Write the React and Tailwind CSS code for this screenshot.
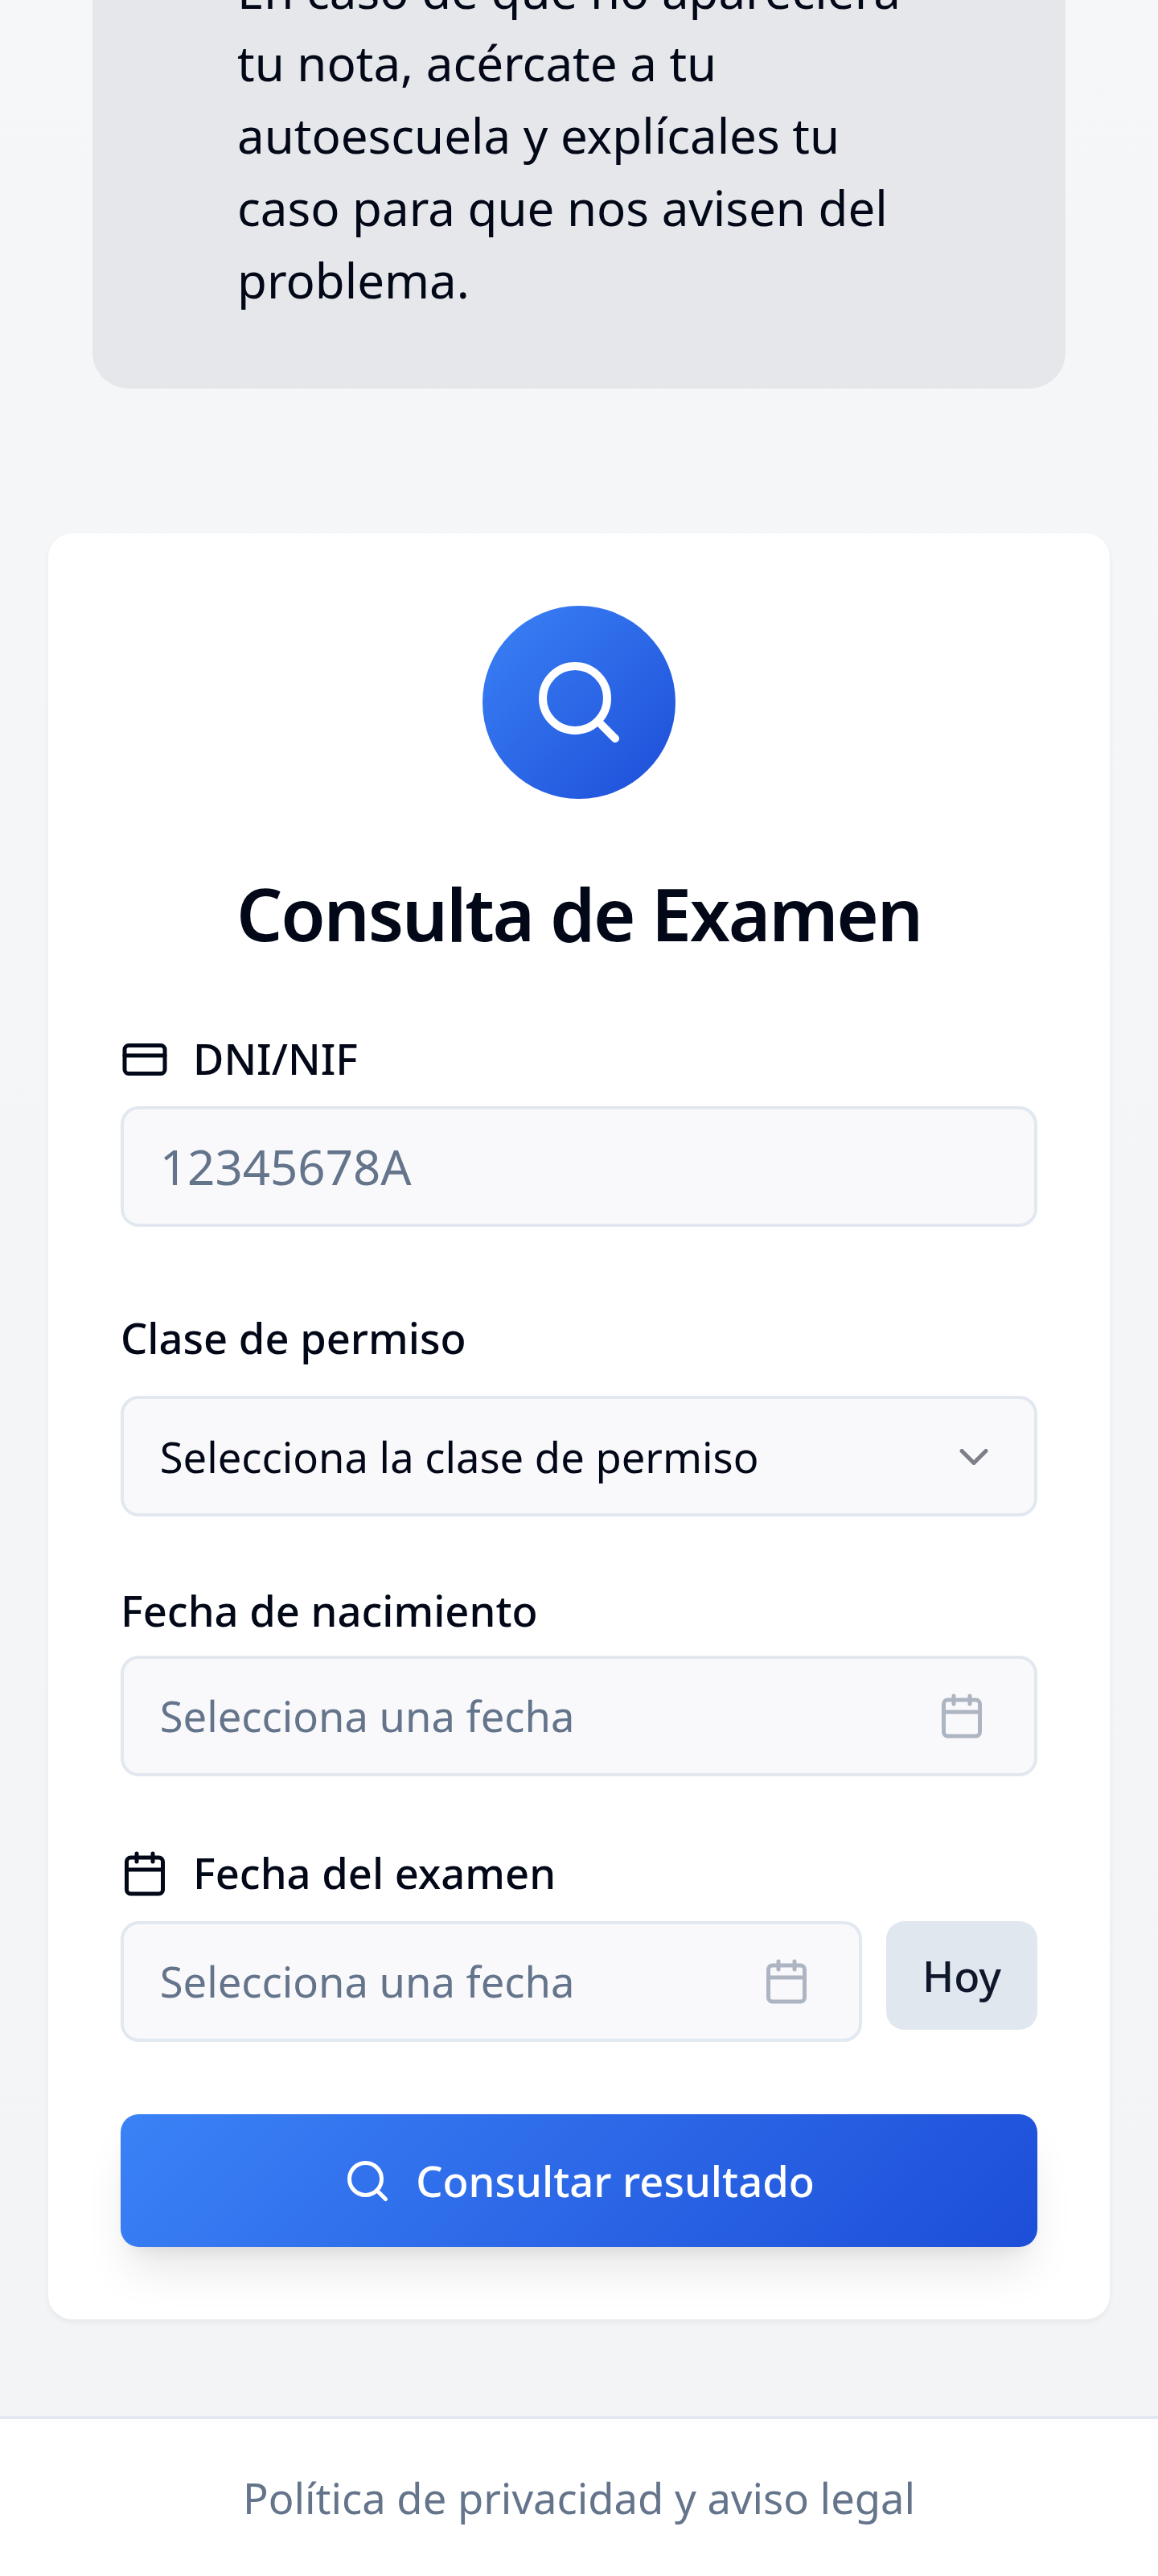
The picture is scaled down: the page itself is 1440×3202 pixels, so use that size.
import React from "react";
import { Search, CreditCard, ChevronDown, Calendar } from "lucide-react";

function Label({ icon: Icon, className = "", children }) {
  return (
    <label
      className={`flex h-[60px] items-center gap-[30px] text-[52.5px] leading-none font-medium ${className}`}
    >
      {Icon && <Icon className="mt-px size-[60px] shrink-0" />}
      {children}
    </label>
  );
}

const fieldClass =
  "flex h-[150px] w-full items-center rounded-[22.5px] border-4 border-[#e2e8f0] bg-[#f9f9fb] pl-[44.75px]";

function DateField({ className = "" }) {
  return (
    <button
      type="button"
      className={`${fieldClass} justify-between pr-[59.75px] text-[52.5px] leading-[75px] text-[#64748b] ${className}`}
    >
      <span className="-mt-px">Selecciona una fecha</span>
      <Calendar className="size-[60px] opacity-50" />
    </button>
  );
}

export default function App() {
  return (
    <div className="flex h-[3202px] w-[1440px] flex-col overflow-hidden bg-[linear-gradient(to_bottom,#f9fafb,#f3f4f6)] bg-[length:100%_7348px] bg-bottom font-['Noto_Sans',sans-serif] text-[#020817]">
      <section className="mx-[115px] flex h-[483px] shrink-0 items-end overflow-hidden rounded-b-[45px] bg-[#e5e7eb] px-[180px] pb-[90px]">
        <p className="text-[60px] leading-[90px]">
          En caso de que no apareciera tu nota, acércate a tu autoescuela y
          explícales tu caso para que nos avisen del problema.
        </p>
      </section>

      <main className="mx-[60px] mt-[180px] flex h-[2220px] shrink-0 flex-col rounded-[30px] bg-white p-[90px] shadow-[0_3.75px_7.5px_0_rgba(0,0,0,0.05)]">
        <div className="flex size-[240px] items-center justify-center self-center rounded-full bg-[linear-gradient(135deg,#3b82f6,#1d4ed8)] text-white">
          <Search className="size-[120px]" />
        </div>
        <h1 className="mt-[82px] text-center text-[90px] leading-[120px] font-semibold tracking-[-0.025em]">
          Consulta de Examen
        </h1>

        <Label icon={CreditCard} className="mt-[91px]">
          DNI/NIF
        </Label>
        <input
          placeholder="12345678A"
          className={`${fieldClass} mt-[29px] pr-[44.75px] text-[60px] leading-[90px] placeholder:text-[#64748b]`}
        />

        <Label className="mt-[108px]">Clase de permiso</Label>
        <button
          type="button"
          className={`${fieldClass} mt-[42px] justify-between pr-[44.75px] text-[52.5px] leading-[75px]`}
        >
          <span>Selecciona la clase de permiso</span>
          <ChevronDown className="mt-[2px] size-[60px] opacity-50" />
        </button>

        <Label className="mt-[87px]">Fecha de nacimiento</Label>
        <DateField className="mt-[26px]" />

        <Label icon={Calendar} className="mt-[90px]">
          Fecha del examen
        </Label>
        <div className="mt-[30px] flex items-start gap-[30px]">
          <DateField />
          <button
            type="button"
            className="flex h-[135px] w-[188px] shrink-0 items-center justify-center rounded-[22.5px] bg-[#e1e7ef] text-[52.5px] leading-[75px] font-medium text-[#0f172a]"
          >
            Hoy
          </button>
        </div>

        <button
          type="button"
          className="mt-[90px] flex h-[165px] items-center justify-center gap-[30px] rounded-[22.5px] bg-[linear-gradient(135deg,#3b82f6,#1d4ed8)] text-[52.5px] leading-[75px] font-medium text-white shadow-[0_37.5px_56.25px_-11.25px_rgba(0,0,0,0.1),0_15px_22.5px_-15px_rgba(0,0,0,0.1)]"
        >
          <Search className="size-[60px]" />
          Consultar resultado
        </button>
      </main>

      <footer className="mt-[120px] flex flex-1 justify-center border-t-4 border-[#e2e8f0] bg-white pt-[60px] text-[52.5px] leading-[75px] text-[#64748b]">
        Política de privacidad y aviso legal
      </footer>
    </div>
  );
}
